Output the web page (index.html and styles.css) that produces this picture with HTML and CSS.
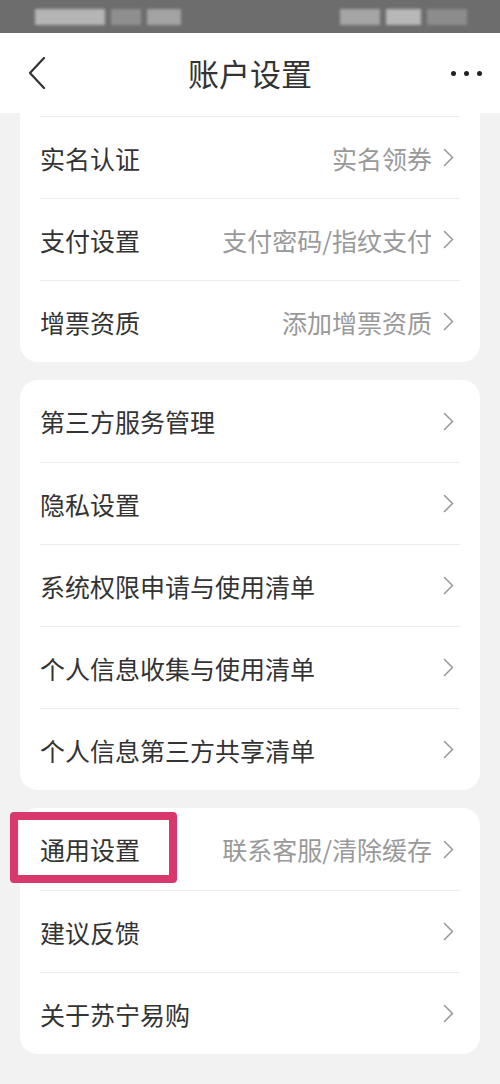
FILE: index.html
```html
<!DOCTYPE html>
<html lang="zh-CN">
<head>
  <meta charset="UTF-8" />
  <meta name="viewport" content="width=device-width, initial-scale=1" />
  <title>账户设置</title>
  <link rel="stylesheet" href="styles.css">
</head>
<body>
  <div class="status-bar">
    <div class="blur-group">
      <span class="blur b1"></span><span class="blur b2"></span><span class="blur b3"></span>
    </div>
    <div class="blur-group">
      <span class="blur b4"></span><span class="blur b5"></span><span class="blur b6"></span>
    </div>
  </div>

  <header class="nav">
    <svg class="back" width="18" height="32" viewBox="0 0 18 32">
      <path d="M16 1 L2 16 L16 31" fill="none" stroke="#333" stroke-width="2.2" stroke-linecap="round" stroke-linejoin="round"/>
    </svg>
    <h1>账户设置</h1>
    <div class="more"><span></span><span></span><span></span></div>
  </header>

  <main class="content">
    <section class="card card-top">
      <div class="row"><span class="label">实名认证</span><span class="value">实名领券</span><svg class="arrow" viewBox="0 0 11 19"><path d="M1.5 1.5 L9.5 9.5 L1.5 17.5"/></svg></div>
      <div class="row"><span class="label">支付设置</span><span class="value">支付密码/指纹支付</span><svg class="arrow" viewBox="0 0 11 19"><path d="M1.5 1.5 L9.5 9.5 L1.5 17.5"/></svg></div>
      <div class="row"><span class="label">增票资质</span><span class="value">添加增票资质</span><svg class="arrow" viewBox="0 0 11 19"><path d="M1.5 1.5 L9.5 9.5 L1.5 17.5"/></svg></div>
    </section>

    <section class="card">
      <div class="row"><span class="label">第三方服务管理</span><svg class="arrow" viewBox="0 0 11 19"><path d="M1.5 1.5 L9.5 9.5 L1.5 17.5"/></svg></div>
      <div class="row"><span class="label">隐私设置</span><svg class="arrow" viewBox="0 0 11 19"><path d="M1.5 1.5 L9.5 9.5 L1.5 17.5"/></svg></div>
      <div class="row"><span class="label">系统权限申请与使用清单</span><svg class="arrow" viewBox="0 0 11 19"><path d="M1.5 1.5 L9.5 9.5 L1.5 17.5"/></svg></div>
      <div class="row"><span class="label">个人信息收集与使用清单</span><svg class="arrow" viewBox="0 0 11 19"><path d="M1.5 1.5 L9.5 9.5 L1.5 17.5"/></svg></div>
      <div class="row"><span class="label">个人信息第三方共享清单</span><svg class="arrow" viewBox="0 0 11 19"><path d="M1.5 1.5 L9.5 9.5 L1.5 17.5"/></svg></div>
    </section>

    <section class="card">
      <div class="row"><span class="label">通用设置</span><span class="value">联系客服/清除缓存</span><svg class="arrow" viewBox="0 0 11 19"><path d="M1.5 1.5 L9.5 9.5 L1.5 17.5"/></svg><span class="highlight"></span></div>
      <div class="row"><span class="label">建议反馈</span><svg class="arrow" viewBox="0 0 11 19"><path d="M1.5 1.5 L9.5 9.5 L1.5 17.5"/></svg></div>
      <div class="row"><span class="label">关于苏宁易购</span><svg class="arrow" viewBox="0 0 11 19"><path d="M1.5 1.5 L9.5 9.5 L1.5 17.5"/></svg></div>
    </section>
  </main>
</body>
</html>
```

FILE: styles.css
```css
body {
  margin: 0;
  background: #f2f2f2;
  font-family: "Noto Sans CJK SC", "Noto Sans", sans-serif;
  color: #333;
  height: 1084px;
  overflow: hidden;
}
.status-bar {
  height: 33px;
  background: #6d6d6d;
  display: flex;
  justify-content: space-between;
  align-items: center;
  padding: 0 33px 0 35px;
  overflow: hidden;
}
.blur-group {
  display: flex;
  gap: 6px;
  filter: blur(1.5px);
}
.blur {
  display: block;
  height: 16px;
  background: #a8a8a8;
}
.b1 { width: 70px; background: #b5b5b5; }
.b2 { width: 30px; background: #8f8f8f; }
.b3 { width: 34px; background: #a3a3a3; }
.b4 { width: 40px; background: #a5a5a5; }
.b5 { width: 35px; background: #b8b8b8; }
.b6 { width: 40px; background: #8c8c8c; }

.nav {
  height: 80px;
  background: #fff;
  display: flex;
  align-items: center;
  justify-content: space-between;
  padding: 0 18px 0 28px;
  position: relative;
}
.nav h1 {
  margin: 0;
  font-size: 31px;
  font-weight: 400;
  color: #333;
  position: absolute;
  left: 0;
  right: 0;
  text-align: center;
  line-height: 80px;
}
.back {
  margin-top: -1px;
}
.more {
  display: flex;
  gap: 8px;
}
.more span {
  width: 5px;
  height: 5px;
  border-radius: 50%;
  background: #222;
}

.content {
  padding: 0 20px;
  display: flex;
  flex-direction: column;
  gap: 18px;
}
.card {
  background: #fff;
  border-radius: 18px;
  padding: 0 20px;
}
.card-top {
  border-radius: 0 0 18px 18px;
  padding-top: 3px;
}
.row {
  height: 81px;
  display: flex;
  align-items: center;
  border-top: 1px solid #ececec;
  position: relative;
}
.card .row:first-child {
  border-top: none;
  height: 82px;
}
.card-top .row:first-child {
  border-top: 1px solid #ececec;
  height: 81px;
}
.label {
  flex: 1;
  font-size: 25px;
  color: #333;
}
.value {
  font-size: 25px;
  color: #999;
  margin-right: 11px;
}
.arrow {
  width: 11px;
  height: 19px;
  margin-right: 6px;
  fill: none;
  stroke: #999;
  stroke-width: 1.6;
  stroke-linecap: round;
  stroke-linejoin: round;
}
.highlight {
  position: absolute;
  left: -30px;
  top: 4px;
  width: 151px;
  height: 55px;
  border: 8px solid #d9386c;
  border-radius: 4px;
}
```
